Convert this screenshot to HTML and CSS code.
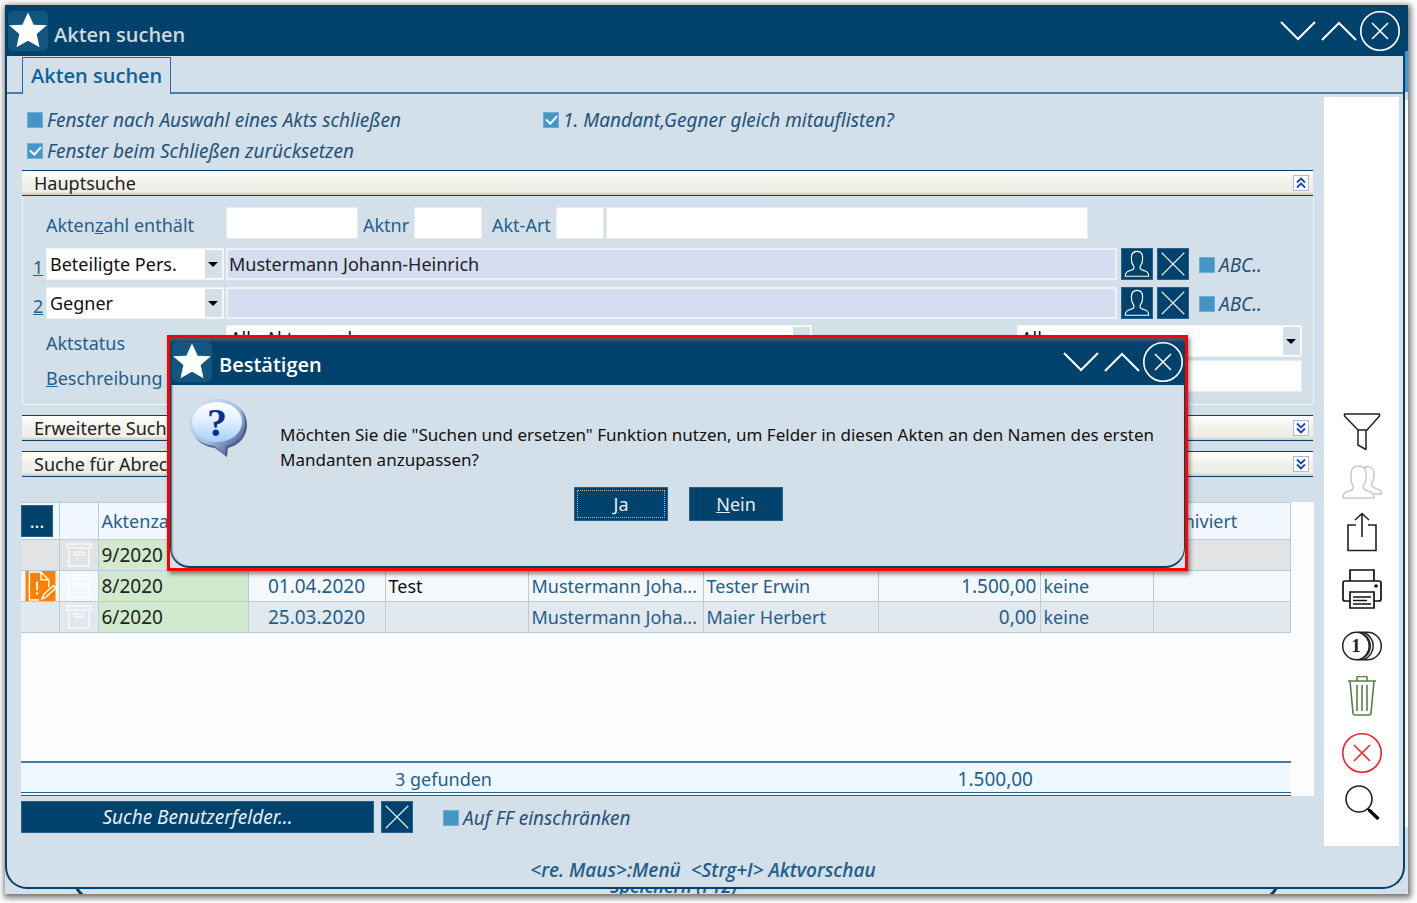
FILE: index.html
```html
<!DOCTYPE html>
<html lang="de">
<head>
<meta charset="utf-8">
<title>Akten suchen</title>
<link rel="stylesheet" href="styles.css">
</head>
<body>
<svg class="symbols" aria-hidden="true">
  <symbol id="star" viewBox="0 0 40 40"><rect width="40" height="40" rx="5" fill="#12557f"/><path d="M20 1.500l5.700 12.200 13.200.6-10.200 8.700 2.800 13.200L20 29.800 8.500 36.200l2.800-13.200L1.100 14.300l13.200-.6z" fill="#fff"/></symbol>
  <symbol id="down" viewBox="0 0 36 20"><path d="M1 1l17 17L35 1" fill="none" stroke="#fff" stroke-width="2"/></symbol>
  <symbol id="up" viewBox="0 0 36 20"><path d="M1 19L18 2l17 17" fill="none" stroke="#fff" stroke-width="2"/></symbol>
  <symbol id="close" viewBox="0 0 40 40"><g fill="none" stroke="currentColor" stroke-width="1.600"><circle cx="20" cy="20" r="19.200"/><path d="M12 12l16 16M28 12L12 28"/></g></symbol>
  <symbol id="person" viewBox="0 0 32 32"><path d="M3.500 29c0-4.500 3-5.500 6.500-6.500 3-1 3.500-2.500 2-5-1.500-2-2-4-2-8 0-4.500 2.500-7 6-7s6 2.500 6 7c0 4-.5 6-2 8-1.500 2.500-1 4 2 5 3.500 1 6.500 2 6.500 6.500z" fill="none" stroke="#fff" stroke-width="1.200"/></symbol>
  <symbol id="cross" viewBox="0 0 32 32"><path d="M4 4l24 24M28 4L4 28" fill="none" stroke="#e6eef4" stroke-width="1.300"/></symbol>
  <symbol id="chevrons" viewBox="0 0 10 12"><path d="M1 5.500l4-4 4 4M1 10.500l4-4 4 4" fill="none" stroke="#1546b0" stroke-width="1.800"/></symbol>
  <symbol id="box" viewBox="0 0 26 24"><g fill="none" stroke="#fff" stroke-opacity=".75" stroke-width="1.500"><path d="M1 1h24v4H1zM3 6v17h20V6"/><rect x="8" y="9" width="10" height="3" rx="1.500"/></g></symbol>
</svg>

<div class="frame">
  <div class="behind" aria-hidden="true"><div class="behind-side"></div><div class="behind-curve"></div><span class="behind-text">Speichern (F12)</span></div>

  <main class="window">
    <header class="titlebar">
      <svg class="star"><use href="#star"/></svg>
      <h1 class="title">Akten suchen</h1>
      <button class="tool" aria-label="Minimieren"><svg class="chev"><use href="#down"/></svg></button>
      <button class="tool" aria-label="Maximieren"><svg class="chev"><use href="#up"/></svg></button>
      <button class="tool" aria-label="Schließen"><svg class="round"><use href="#close"/></svg></button>
    </header>
    <nav class="tabs"><button class="tab">Akten suchen</button></nav>

    <div class="body">
      <div class="content">
        <div class="options">
          <label class="check"><input type="checkbox">Fenster nach Auswahl eines Akts schließen</label>
          <label class="check"><input type="checkbox" checked>1. Mandant,Gegner gleich mitauflisten?</label>
          <label class="check"><input type="checkbox" checked>Fenster beim Schließen zurücksetzen</label>
        </div>

        <section>
          <h2 class="bar">Hauptsuche<button class="fold" aria-label="Einklappen"><svg><use href="#chevrons"/></svg></button></h2>
          <div class="panel">
            <div class="row first">
              <label class="name" for="zahl">Akten<u>z</u>ahl enthält</label>
              <input class="field w-zahl" id="zahl">
              <label class="inner" for="nr">Aktnr</label>
              <input class="field w-nr" id="nr">
              <label class="inner wide" for="art">Akt-Art</label>
              <input class="field w-art" id="art">
              <input class="field w-text" aria-label="Akt-Art Bezeichnung">
            </div>
            <div class="row">
              <label class="num" for="p1"><u>1</u></label>
              <span class="select w-kind"><select aria-label="Art 1"><option>Beteiligte Pers.</option></select></span>
              <input class="field lilac" id="p1" value="Mustermann Johann-Heinrich">
              <button class="sq" aria-label="Person wählen"><svg><use href="#person"/></svg></button>
              <button class="sq" aria-label="Leeren"><svg><use href="#cross"/></svg></button>
              <label class="check abc"><input type="checkbox">ABC..</label>
            </div>
            <div class="row">
              <label class="num" for="p2"><u>2</u></label>
              <span class="select w-kind"><select aria-label="Art 2"><option>Gegner</option></select></span>
              <input class="field lilac" id="p2">
              <button class="sq" aria-label="Person wählen"><svg><use href="#person"/></svg></button>
              <button class="sq" aria-label="Leeren"><svg><use href="#cross"/></svg></button>
              <label class="check abc"><input type="checkbox">ABC..</label>
            </div>
            <div class="row tight">
              <label class="name" for="status">Aktstatus</label>
              <span class="select w-status"><select id="status"><option>Alle Akten suchen</option></select></span>
              <span class="select w-all"><select aria-label="Filter"><option>Alle</option></select></span>
            </div>
            <div class="row tighter">
              <label class="name" for="desc"><u>B</u>eschreibung</label>
              <input class="field w-desc" id="desc">
            </div>
          </div>
        </section>
        <h2 class="bar closed">Erweiterte Suche<button class="fold" aria-label="Ausklappen"><svg><use href="#chevrons"/></svg></button></h2>
        <h2 class="bar closed">Suche für Abrechnung<button class="fold" aria-label="Ausklappen"><svg><use href="#chevrons"/></svg></button></h2>

        <div class="results">
          <table class="grid">
            <colgroup><col class="c38"><col class="c39"><col class="c150"><col class="c137"><col class="c143"><col class="c175"><col class="c175"><col class="c162"><col class="c113"><col></colgroup>
            <thead><tr><th class="menu"><button class="sq dots" aria-label="Spalten">...</button></th><th></th><th>Aktenzahl</th><th></th><th></th><th></th><th></th><th></th><th></th><th>Archiviert</th></tr></thead>
            <tbody>
              <tr class="gray"><td></td><td class="pic"><svg><use href="#box"/></svg></td><td class="file">9/2020</td><td></td><td></td><td></td><td></td><td></td><td></td><td></td></tr>
              <tr class="light"><td class="pic warn"><svg viewBox="0 0 31 31"><rect width="31" height="31" fill="#ff8000"/><g fill="none" stroke="#fff" stroke-width="1.500"><path d="M14 30H4V1h12l8 8v8M16 1v8h8"/><path d="M12 11v9M12 22v2.500" stroke-width="2"/><path d="M17 29l2-5 10-9 2 3-10 9z"/></g></svg></td><td class="pic"><svg><use href="#box"/></svg></td><td class="file">8/2020</td><td class="mid">01.04.2020</td><td class="black">Test</td><td>Mustermann Joha...</td><td>Tester Erwin</td><td class="right">1.500,00</td><td>keine</td><td></td></tr>
              <tr class="blue"><td></td><td class="pic"><svg><use href="#box"/></svg></td><td class="file">6/2020</td><td class="mid">25.03.2020</td><td></td><td>Mustermann Joha...</td><td>Maier Herbert</td><td class="right">0,00</td><td>keine</td><td></td></tr>
            </tbody>
          </table>
          <div class="sum"><span class="count">3 gefunden</span><span class="total">1.500,00</span></div>
        </div>

        <div class="actions">
          <button class="wide-button">Suche Benutzerfelder...</button>
          <button class="sq" aria-label="Leeren"><svg><use href="#cross"/></svg></button>
          <label class="check ff"><input type="checkbox">Auf FF einschränken</label>
        </div>
      </div>

      <aside class="side">
        <div class="group">
          <button aria-label="Filter"><svg viewBox="0 0 40 40"><g fill="none" stroke="#222" stroke-width="1.500" stroke-linejoin="round"><path d="M2.500 2h35v2L25 18H16L2.500 4zM16 18v15l8 4.500V18"/></g></svg></button>
          <button aria-label="Personen"><svg viewBox="0 0 40 40"><g fill="none" stroke="#c9c9c9" stroke-width="1.500"><path d="M1 36c0-5 2-6 6-7 5-1.500 5-4 3.500-6.500C8.500 20 9 17 9 12c0-5 2-8 7.500-8S24 7 24 12s.5 8-2 10.500c-1.500 2.500-1.500 5 3.500 6.500 4 1 6.500 2 6.500 7z"/><path d="M22 5.500c2-1 10-2 10 6 0 5-.5 7-2 9-1.500 2.500 0 4.500 4 6s5.500 2 5.500 5.500h-8"/></g></svg></button>
          <button aria-label="Exportieren"><svg viewBox="0 0 40 40"><path d="M14 13H6v25.500h28V13h-8M20 25V1.500M13 8l7-6.500L27 8" fill="none" stroke="#222" stroke-width="1.600"/></svg></button>
        </div>
        <div class="group">
          <button aria-label="Drucken"><svg viewBox="0 0 40 40"><g fill="none" stroke="#111" stroke-width="1.700"><path d="M8 12V1h24v11M8 32H3q-2 0-2-2V14q0-2 2-2h34q2 0 2 2v16q0 2-2 2h-5"/><path d="M8 23h24v16H8zM11 28h18M11 31.500h14M11 35h18"/></g><circle cx="34" cy="17" r="1.800" fill="#111"/></svg></button>
        </div>
        <div class="group">
          <button aria-label="Beträge"><svg viewBox="0 0 40 40"><g fill="none" stroke="#222" stroke-width="1.500"><circle cx="14.500" cy="20" r="13.800"/><path d="M16 6.200h9.500M16 33.800h9.500M18 6.500a14.500 14.500 0 0 1 0 27M22 6.500a14.500 14.500 0 0 1 0 27M25.500 6.200a13.800 13.800 0 0 1 0 27.600"/></g><text x="14" y="26" text-anchor="middle" class="coin">1</text></svg></button>
          <button aria-label="Löschen"><svg viewBox="0 0 40 40"><g fill="none" stroke="#5b7d46" stroke-width="1.600"><path d="M6 5h28M15 5V1.500q0-1 1-1h8q1 0 1 1V5M8 5l3 32q0 2 2 2h14q2 0 2-2l3-32M15 9v26M20 9v26M25 9v26"/></g></svg></button>
        </div>
        <div class="group">
          <button class="red" aria-label="Abbrechen"><svg><use href="#close"/></svg></button>
          <button aria-label="Suchen"><svg viewBox="0 0 40 40"><circle cx="17" cy="16" r="13" fill="none" stroke="#222" stroke-width="1.600"/><path d="M25.500 25.500l3 3" stroke="#000" stroke-width="2"/><path d="M27 27l9.500 9" stroke="#000" stroke-width="3.200"/></svg></button>
        </div>
      </aside>
    </div>
    <footer class="hint">&lt;re. Maus&gt;:Menü&nbsp; &lt;Strg+I&gt; Aktvorschau</footer>
  </main>

  <div class="dialog" role="dialog" aria-labelledby="ask">
    <div class="dialog-window">
      <header class="titlebar small">
        <svg class="star"><use href="#star"/></svg>
        <h2 class="title bright" id="ask">Bestätigen</h2>
        <button class="tool" aria-label="Minimieren"><svg class="chev"><use href="#down"/></svg></button>
        <button class="tool" aria-label="Maximieren"><svg class="chev"><use href="#up"/></svg></button>
        <button class="tool" aria-label="Schließen"><svg class="round"><use href="#close"/></svg></button>
      </header>
      <div class="ask">
        <svg class="bubble" viewBox="0 0 60 60">
          <defs>
            <linearGradient id="g1" x1="0" y1="0" x2="1" y2="1"><stop offset="0" stop-color="#dfe8f4"/><stop offset=".55" stop-color="#a4bde0"/><stop offset="1" stop-color="#26447f"/></linearGradient>
            <linearGradient id="g2" x1="0" y1="0" x2="0" y2="1"><stop offset="0" stop-color="#fff"/><stop offset=".45" stop-color="#e4f0ff"/><stop offset="1" stop-color="#a5cffa"/></linearGradient>
          </defs>
          <path d="M31 3c17 0 28 10 28 24 0 11-7 20-19 23l-1 9-12-9C12 48 3 38 3 27 3 13 14 3 31 3z" fill="#1d3566" opacity=".75"/>
          <path d="M29 1c17 0 28 10 28 24 0 11-7 20-19 23l-1 9-11-9C10 46 1 36 1 25 1 11 12 1 29 1z" fill="url(#g1)"/>
          <ellipse cx="29" cy="24" rx="25" ry="20" fill="url(#g2)"/>
          <text x="29" y="38" text-anchor="middle" class="mark">?</text>
        </svg>
        <p class="message">Möchten Sie die "Suchen und ersetzen" Funktion nutzen, um Felder in diesen Akten an den Namen des ersten<br>Mandanten anzupassen?</p>
      </div>
      <div class="answers"><button class="answer focus"><u>J</u>a</button><button class="answer"><u>N</u>ein</button></div>
    </div>
  </div>
</div>
</body>
</html>
```

FILE: styles.css
```css
:root {
  --navy: #00426b;
  --pale: #d4e0e9;
  --ink: #1f5f8b;
  --line: #b8ccda;
}
* { box-sizing: border-box; }
body {
  margin: 0;
  padding: 5px 9px 9px 5px;
  background: #fff;
  color: var(--ink);
  font: 18px/24px "Noto Sans", "Open Sans", sans-serif;
}
button, input, select { font: inherit; color: inherit; border: 0; border-radius: 0; margin: 0; padding: 0; }
button { background: none; }
svg { display: block; }
h1, h2, p { margin: 0; font-size: 18px; }
.symbols { position: absolute; width: 0; height: 0; }

.frame {
  position: relative;
  display: flex;
  min-height: calc(100vh - 14px);
  padding: 0 3px 5px 0;
  background: var(--pale);
  box-shadow: 1px 2px 6px 2px rgba(0, 0, 0, .55);
}
.behind { position: absolute; inset: 0; overflow: hidden; }
.behind-side { position: absolute; right: 0; top: 0; width: 50px; height: 822px; background: linear-gradient(var(--navy) 46px, #4596c7 46px 87px, var(--pale) 87px 95px, #fff 95px); }
.behind-curve { position: absolute; left: 68px; right: 128px; bottom: -8px; height: 60px; border: 3px solid var(--navy); border-radius: 0 0 24px 24px; }
.behind-text { position: absolute; left: 605px; bottom: -4px; font-weight: 600; font-style: italic; }

.window {
  position: relative;
  flex: 1;
  min-width: 0;
  display: flex;
  flex-direction: column;
  background: var(--pale);
  border: solid var(--navy);
  border-width: 0 2px 2px;
  border-radius: 0 0 22px 22px;
}
.titlebar {
  display: flex;
  align-items: center;
  gap: 5px;
  margin: 0 -2px;
  padding: 0 5px 0 3px;
  height: 51px;
  background: var(--navy);
}
.star { width: 40px; height: 40px; }
.title { flex: 1; padding: 8px 0 0 1px; color: #cfd6dc; font: 600 20px/24px "Open Sans", sans-serif; }
.bright { color: #fff; padding-left: 2px; }
.tool { color: #fff; }
.chev { width: 36px; height: 20px; }
.round { width: 40px; height: 40px; }
.tool:last-child { margin-left: -2px; }

.tabs { display: flex; padding: 1px 0 0 15px; box-shadow: inset 0 -2px #3f83ad; height: 38px; }
.tab { padding: 0 8px; border: 1px solid #1f6d9f; border-bottom: 0; background: var(--pale); color: #0f619a; font: 600 20px/24px "Open Sans", sans-serif; }

.body { flex: 1; display: flex; gap: 10px; padding: 3px 4px 0 15px; }
.content { flex: 1; min-width: 0; display: flex; flex-direction: column; }
.options { display: grid; grid-template-columns: 516px 1fr; row-gap: 7px; padding: 11px 5px 7px; }
.check { display: flex; align-items: center; gap: 4px; color: #24527a; font-size: 19px; font-style: italic; }
.check input { appearance: none; flex: none; position: relative; width: 16px; height: 16px; background: #4596c7; border: 1px solid #6fadd3; }
.check input:checked::after { content: ""; position: absolute; left: 4px; top: 0; width: 5px; height: 9px; border: solid #fff; border-width: 0 2px 2px 0; transform: rotate(42deg); }

.bar {
  display: flex;
  align-items: center;
  justify-content: space-between;
  height: 26px;
  margin-right: 1px;
  padding: 0 4px 0 12px;
  border: solid var(--navy);
  border-width: 1px 0;
  background: linear-gradient(#fff, #f1f1ea 50%, #efefe6 85%, #cfcabb);
  color: #222;
  font-weight: 400;
}
.closed { margin-top: 10px; }
.fold { display: grid; place-items: center; width: 16px; height: 16px; background: #fff; border: 1px solid #b0b8e0; }
.fold svg { width: 10px; height: 12px; }
.closed .fold svg { transform: rotate(180deg); }

.panel { display: flex; flex-direction: column; gap: 7px; padding: 11px 11px 12px 10px; border: 1px solid #f1f5f8; border-top: 0; }
.row { display: flex; align-items: center; }
.first { margin-bottom: 2px; }
.tight { margin-top: -1px; }
.tighter { margin-top: -4px; }
.name { width: 193px; padding: 4px 0 0 13px; }
.num { width: 13px; padding-top: 5px; }
.inner { padding: 4px 0 0 5px; width: 56px; }
.wide { padding-left: 10px; width: 74px; }
.field { height: 32px; min-width: 0; padding: 0 3px; background: #fff; border: 1px solid #e6edf3; color: #222; }
.w-zahl { width: 132px; }
.w-nr { width: 68px; }
.w-art { width: 48px; margin-right: 2px; }
.w-text { flex: 0 1 482px; }
.w-desc { flex: 1; }
.lilac { flex: 1; background: #d5ddf0; border: 2px solid #edf2f8; padding: 0 1px; }
.select { position: relative; display: flex; height: 32px; }
.select select { appearance: none; width: 100%; padding: 0 24px 0 3px; background: #fff; border: 1px solid #eef3f7; color: #111; }
.tight select { padding-bottom: 6px; }
.select::before { content: ""; position: absolute; right: 2px; top: 2px; bottom: 2px; width: 17px; background: var(--pale); pointer-events: none; }
.select::after { content: ""; position: absolute; right: 6px; top: 14px; border: 5px solid transparent; border-top-color: #000; border-bottom: 0; pointer-events: none; }
.w-kind { width: 178px; margin-right: 2px; }
.w-status { width: 586px; margin-right: auto; }
.w-all { width: 285px; }
.sq { flex: none; width: 32px; height: 32px; margin-left: 4px; background: var(--navy); border: 1px solid #2a618a; color: #fff; }
.sq svg { width: 30px; height: 30px; }
.abc { width: 113px; padding: 2px 0 0 10px; }

.results { flex: 1; display: flex; flex-direction: column; margin: 25px 0 5px -1px; background: #fbfcfe; }
.grid { width: calc(100% - 23px); border-collapse: collapse; table-layout: fixed; }
.grid th, .grid td { height: 31px; padding: 0 3px; border: 1px solid var(--line); font-weight: 400; text-align: left; white-space: nowrap; }
.grid th { height: 37px; background: #f0f7fe; }
.grid tr > :first-child { border-left: 0; }
.grid .menu { padding: 0; }
.dots { margin: 0; display: block; }
.c38 { width: 38px; } .c39 { width: 39px; } .c150 { width: 150px; } .c137 { width: 137px; } .c143 { width: 143px; }
.c175 { width: 175px; } .c162 { width: 162px; } .c113 { width: 113px; }
.gray td { background: #e2e3e4; }
.light td { background: #f4f8fb; }
.blue td { background: #e1e8ee; }
.grid .file { background: #d1eacd; color: #222; font-size: 19px; }
.grid .mid { text-align: center; font-size: 19px; }
.grid .right { text-align: right; font-size: 19px; }
.grid .black { color: #111; }
.grid .pic { padding: 0 0 0 6px; }
.pic svg { width: 26px; height: 24px; }
.grid .warn { padding-left: 4px; }
.warn svg { width: 31px; height: 30px; }
.sum { display: grid; grid-template-columns: 506px 506px; align-items: center; width: calc(100% - 23px); height: 35px; margin-top: auto; padding-top: 2px; background: #f0f8ff; border-top: 2px solid #3f7ca3; border-bottom: 4px double #1f5f8b; }
.count { padding-left: 374px; }
.total { text-align: right; font-size: 19px; }

.actions { display: flex; align-items: center; margin-left: -1px; }
.wide-button { width: 353px; height: 32px; margin-right: 3px; background: var(--navy); border: 1px solid #2a618a; color: #e6edf3; font-size: 19px; font-style: italic; }
.ff { margin-left: 30px; padding-top: 2px; }
.hint { padding: 25px 6px 5px 2px; text-align: center; color: #1f5f8b; font: italic 600 19px/24px "Open Sans", sans-serif; }

.side { display: flex; flex-direction: column; justify-content: flex-end; gap: 17px; width: 75px; padding-bottom: 23px; margin-bottom: -13px; background: #fff; }
.group { display: flex; flex-direction: column; align-items: center; gap: 10px; }
.side svg { width: 40px; height: 40px; }
.red { color: #f3222b; }
.coin { font: bold 19px "Liberation Serif", serif; fill: #222; }

.dialog { position: absolute; left: 162px; right: 220px; top: 330px; border: 3px solid #f00; background: var(--pale); box-shadow: 2px 3px 4px rgba(0, 0, 0, .45); }
.dialog-window { border: solid var(--navy); border-width: 0 1px 2px; border-radius: 0 0 20px 20px; box-shadow: inset 1px 1px 2px #555; }
.small { height: 47px; margin: 0 -1px; padding: 0 2px; box-shadow: inset 0 4px 3px -1px #49596a; }
.small .title { padding-top: 6px; }
.ask { display: flex; gap: 32px; padding: 13px 0 0 17px; }
.bubble { width: 60px; height: 60px; flex: none; }
.mark { font: bold 40px "Liberation Serif", serif; fill: #0b2f8f; }
.message { padding-top: 24px; color: #111; font-size: 17px; line-height: 25px; white-space: nowrap; }
.answers { display: flex; justify-content: center; gap: 21px; padding: 15px 0 45px 2px; }
.answer { width: 94px; height: 34px; background: var(--navy); border: 1px solid #2a618a; color: #e6edf3; }
.focus { outline: 1px dotted #f0a860; outline-offset: -4px; }
```
